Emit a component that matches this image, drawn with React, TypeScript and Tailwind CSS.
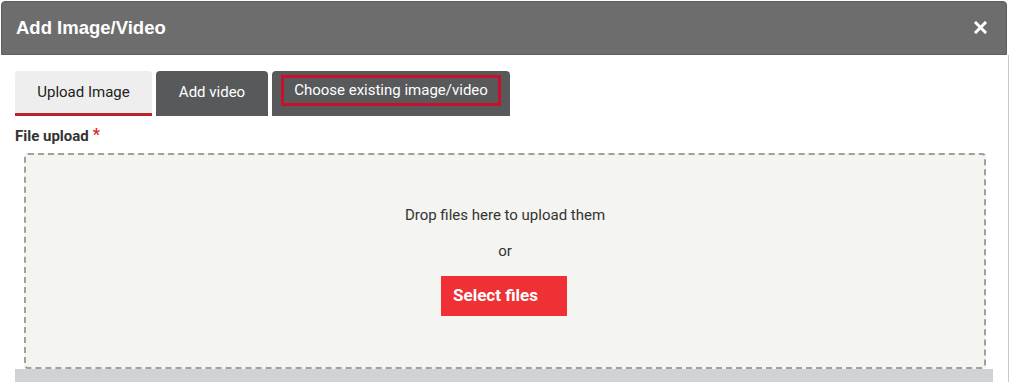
import React from "react";

export default function App() {
  return (
    <div className="w-[1009px] h-[382px] overflow-hidden bg-white" style={{ fontFamily: "Roboto, 'Liberation Sans', sans-serif" }}>
      <div className="ml-[1px] mt-[1px] w-[1006px] h-[54px] rounded-t-[4px] border border-[#5e5e5e] bg-[#6d6d6d] flex items-center justify-between pl-[14px] pr-[19px]">
        <span className="text-white font-bold text-[18.5px]" style={{ fontFamily: "'Liberation Sans', Arial, sans-serif" }}>
          Add Image/Video
        </span>
        <svg width="13" height="13" viewBox="0 0 13 13" className="mt-[-2px]">
          <path d="M2 2 L11 11 M11 2 L2 11" stroke="white" strokeWidth="3" strokeLinecap="square" />
        </svg>
      </div>
      <div className="w-[1009px] h-[327px] border-r border-[#c9c9c9] pl-[15px] pt-[16px]">
        <div className="flex gap-[4px] h-[45px]">
          <div className="w-[137px] h-[45px] rounded-t-[4px] bg-[#eeeeee] border-b-[3px] border-[#b8272c] flex items-center justify-center text-[15px] text-[#222222]">
            Upload Image
          </div>
          <div className="w-[112px] h-[45px] rounded-t-[4px] bg-[#58595b] flex items-center justify-center text-[15px] text-white pb-[3px]">
            Add video
          </div>
          <div className="w-[238px] h-[45px] rounded-t-[4px] bg-[#58595b] flex items-start justify-center pt-[4px]">
            <div className="w-[220px] h-[31px] border-[3px] border-[#c8102e] flex items-center justify-center text-[15px] text-white">
              Choose existing image/video
            </div>
          </div>
        </div>
        <div className="mt-[10px] h-[20px] flex items-center text-[15px] font-bold text-[#333333]">
          File upload<span className="text-[#e0242a] ml-[4px] text-[16px] relative top-[-1px]">*</span>
        </div>
        <div className="ml-[9px] mt-[7px] w-[962px] h-[216px] border-2 border-dashed border-[#a0a0a0] rounded-[4px] bg-[#f4f4f0] flex flex-col items-center">
          <div className="mt-[50px] text-[15px] text-[#333333] h-[20px] leading-[20px]">Drop files here to upload them</div>
          <div className="mt-[16px] text-[15px] text-[#333333] h-[20px] leading-[20px]">or</div>
          <div className="mt-[15px] mr-[2px] w-[126px] h-[40px] bg-[#ef3034] text-white font-bold text-[17px] flex items-center pl-[12px]">
            Select files
          </div>
        </div>
        <div className="w-[978px] h-[14px] bg-[#d1d2d4]" />
      </div>
    </div>
  );
}
